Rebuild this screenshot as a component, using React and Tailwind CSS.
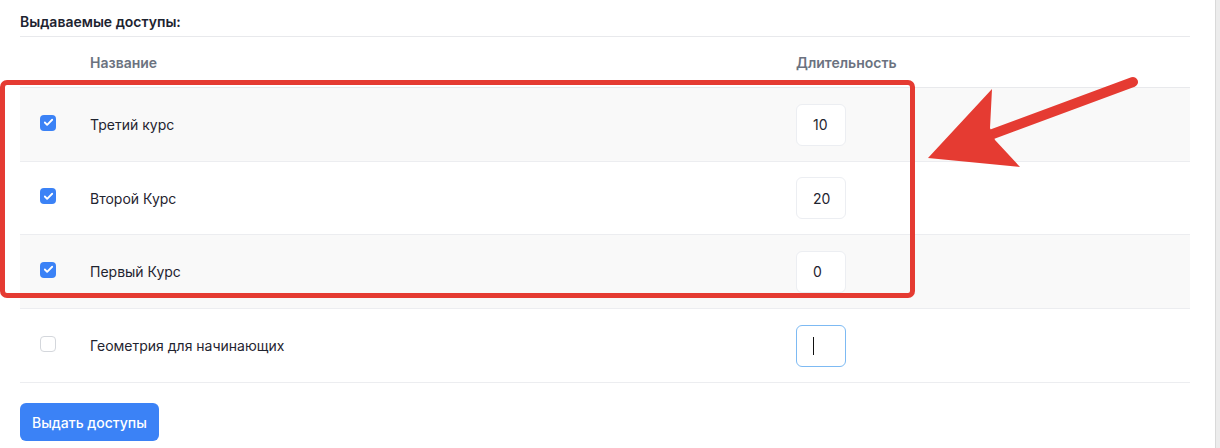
import { Check } from 'lucide-react';

const rows = [
  { name: 'Третий курс', value: '10', checked: true, h: 'h-[74px]' },
  { name: 'Второй Курс', value: '20', checked: true, h: 'h-[73px]' },
  { name: 'Первый Курс', value: '0', checked: true, h: 'h-[74px]' },
  { name: 'Геометрия для начинающих', value: '', checked: false, focused: true, h: 'h-[74px]' },
];

function Checkbox({ checked }) {
  if (checked) {
    return (
      <span className="mb-[4px] flex h-4 w-4 items-center justify-center rounded-[4px] bg-[#3b82f6]">
        <Check size={11} strokeWidth={4} className="text-white" />
      </span>
    );
  }
  return <span className="mb-[4px] block h-4 w-4 rounded-[4px] border border-[#d4d7dc] bg-white" />;
}

export default function App() {
  return (
    <div className="relative flex h-[448px] w-[1220px] overflow-hidden bg-white font-['Inter','Liberation_Sans',sans-serif] text-[#1f2430]">
      <div className="flex-1 pl-5 pr-[25px]">
        <h3 className="border-b border-[#e8e9ec] pt-[14px] pb-[6px] text-[14px] leading-4 font-semibold text-[#1d2330]">
          Выдаваемые доступы:
        </h3>

        <div className="flex h-[51px] items-center border-b border-[#e8e9ec] text-[14px] font-semibold text-[#6b7280]">
          <div className="w-[70px]" />
          <div className="w-[706px]">Название</div>
          <div>Длительность</div>
        </div>

        {rows.map((row, i) => (
          <div
            key={row.name}
            className={`flex ${row.h} items-center border-b border-[#ecedf0] text-[14px] ${i % 2 === 0 ? 'bg-[#f9f9f9]' : 'bg-white'}`}
          >
            <div className="flex w-[70px] pl-5">
              <Checkbox checked={row.checked} />
            </div>
            <div className="w-[706px]">{row.name}</div>
            <div
              className={`flex h-[42px] w-[50px] items-center rounded-[6px] border bg-white pl-[16px] text-[14px] ${row.focused ? 'border-[#7dbaf3]' : 'border-[#eceef2]'}`}
            >
              {row.focused ? <span className="block h-[18px] w-px bg-[#111]" /> : row.value}
            </div>
          </div>
        ))}

        <button
          type="button"
          className="mt-5 h-[38px] rounded-[6px] bg-[#3b82f6] px-3 text-[14px] font-medium text-white"
        >
          Выдать доступы
        </button>
      </div>

      <div className="w-[5px] border-l border-[#d9d9d9] bg-[#ececec]" />

      <div className="pointer-events-none absolute left-0 top-[80px] h-[218px] w-[915px] rounded-[7px] border-[5px] border-[#e53b32]" />

      <svg className="pointer-events-none absolute left-0 top-0" width="1220" height="448" viewBox="0 0 1220 448">
        <line x1="1133" y1="82" x2="990" y2="135" stroke="#e53b32" strokeWidth="10" strokeLinecap="round" />
        <polygon points="928,158 992,89 990,128 995,140 1020,167" fill="#e53b32" />
      </svg>
    </div>
  );
}
